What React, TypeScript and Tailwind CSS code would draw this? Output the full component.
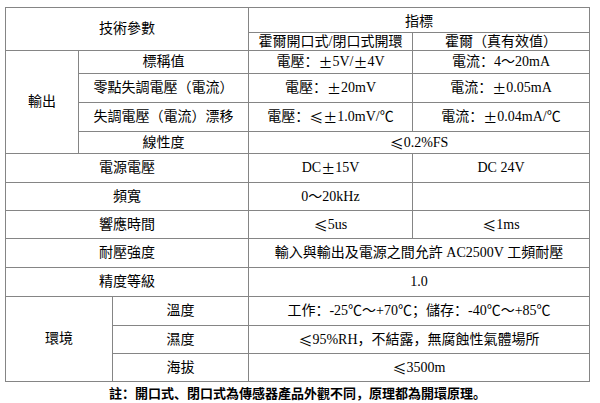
const cell = 'bg-white flex items-center justify-center text-[14px] leading-none text-black whitespace-nowrap';

// ≤ and ± are full width in the original, so take them from the CJK font
function V({ t }: { t: string }) {
  const parts = t.split(/([≤±])/);
  return (
    <>
      {parts.map((p, i) =>
        p === '≤' || p === '±' ? (
          <span key={i} className="font-['Noto_Sans_CJK_SC',sans-serif]">{p}</span>
        ) : (
          <span key={i}>{p}</span>
        )
      )}
    </>
  );
}

export default function App() {
  return (
    <div className="min-h-screen bg-white pt-[7px] pl-[5px] font-['Liberation_Serif','Noto_Sans_CJK_SC',serif]">
      <div className="w-[585px] bg-[#858585] p-px">
        <div className="grid gap-px grid-cols-[72px_33px_135px_163px_176px] grid-rows-[24px_17px_22px_28px_28px_21px_28px_27px_27px_28px_28px_28px_27px_27px]">
          {/* header */}
          <div className={`${cell} col-start-1 col-span-3 row-start-1 row-span-2`}>技術參數</div>
          <div className={`${cell} col-start-4 col-span-2 row-start-1 pt-[4px]`}>指標</div>
          <div className={`${cell} col-start-4 row-start-2`}>霍爾開口式/閉口式開環</div>
          <div className={`${cell} col-start-5 row-start-2`}>霍爾（真有效值）</div>

          {/* 輸出 */}
          <div className={`${cell} col-start-1 row-start-3 row-span-4`}>輸出</div>
          <div className={`${cell} col-start-2 col-span-2 row-start-3`}>標稱值</div>
          <div className={`${cell} col-start-4 row-start-3`}><V t="電壓：±5V/±4V" /></div>
          <div className={`${cell} col-start-5 row-start-3`}>電流：4～20mA</div>

          <div className={`${cell} col-start-2 col-span-2 row-start-4`}>零點失調電壓（電流）</div>
          <div className={`${cell} col-start-4 row-start-4`}><V t="電壓：±20mV" /></div>
          <div className={`${cell} col-start-5 row-start-4`}><V t="電流：±0.05mA" /></div>

          <div className={`${cell} col-start-2 col-span-2 row-start-5`}>失調電壓（電流）漂移</div>
          <div className={`${cell} col-start-4 row-start-5`}><V t="電壓： ≤±1.0mV/℃" /></div>
          <div className={`${cell} col-start-5 row-start-5`}><V t="電流：±0.04mA/℃" /></div>

          <div className={`${cell} col-start-2 col-span-2 row-start-6`}>線性度</div>
          <div className={`${cell} col-start-4 col-span-2 row-start-6`}><V t="≤0.2%FS" /></div>

          {/* single rows */}
          <div className={`${cell} col-start-1 col-span-3 row-start-7`}>電源電壓</div>
          <div className={`${cell} col-start-4 row-start-7`}><V t="DC±15V" /></div>
          <div className={`${cell} col-start-5 row-start-7`}>DC 24V</div>

          <div className={`${cell} col-start-1 col-span-3 row-start-8`}>頻寬</div>
          <div className={`${cell} col-start-4 row-start-8`}>0～20kHz</div>
          <div className={`${cell} col-start-5 row-start-8`}></div>

          <div className={`${cell} col-start-1 col-span-3 row-start-9`}>響應時間</div>
          <div className={`${cell} col-start-4 row-start-9`}><V t="≤5us" /></div>
          <div className={`${cell} col-start-5 row-start-9`}><V t="≤1ms" /></div>

          <div className={`${cell} col-start-1 col-span-3 row-start-10`}>耐壓強度</div>
          <div className={`${cell} col-start-4 col-span-2 row-start-10`}>輸入與輸出及電源之間允許 AC2500V 工頻耐壓</div>

          <div className={`${cell} col-start-1 col-span-3 row-start-11`}>精度等級</div>
          <div className={`${cell} col-start-4 col-span-2 row-start-11`}>1.0</div>

          {/* 環境 */}
          <div className={`${cell} col-start-1 col-span-2 row-start-12 row-span-3`}>環境</div>
          <div className={`${cell} col-start-3 row-start-12`}>溫度</div>
          <div className={`${cell} col-start-4 col-span-2 row-start-12`}>工作：-25℃～+70℃；儲存：-40℃～+85℃</div>
          <div className={`${cell} col-start-3 row-start-13`}>濕度</div>
          <div className={`${cell} col-start-4 col-span-2 row-start-13`}><V t="≤95%RH，不結露，無腐蝕性氣體場所" /></div>
          <div className={`${cell} col-start-3 row-start-14`}>海拔</div>
          <div className={`${cell} col-start-4 col-span-2 row-start-14`}><V t="≤3500m" /></div>
        </div>
      </div>
      <p className="w-[585px] mt-[5px] text-center text-[13px] leading-none font-bold text-black">
        註：開口式、閉口式為傳感器產品外觀不同，原理都為開環原理。
      </p>
    </div>
  );
}
